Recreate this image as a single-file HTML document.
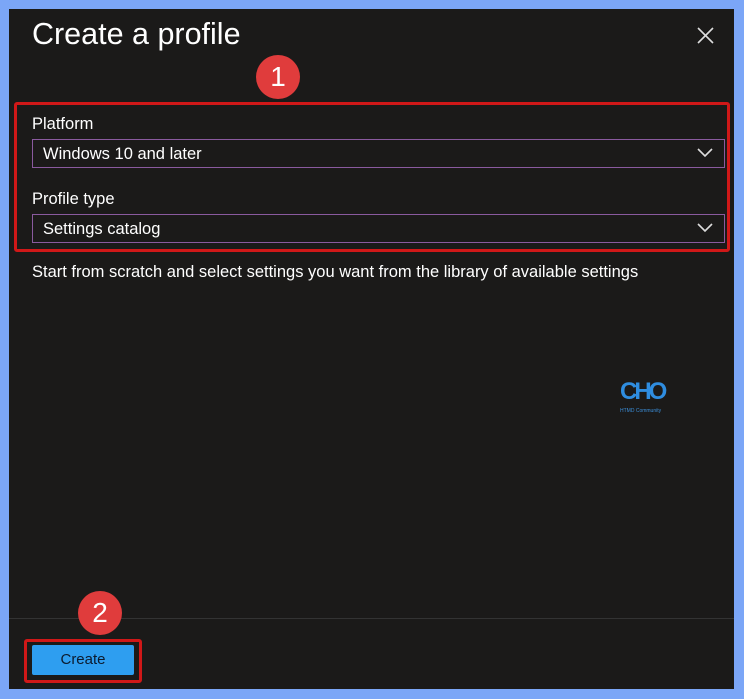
<!DOCTYPE html><html><head><style>
body{margin:0;width:744px;height:699px;background:#7ba6f7;font-family:"Liberation Sans",sans-serif;position:relative;overflow:hidden}
.p{position:absolute;left:9px;top:9px;width:725px;height:680px;background:#1b1a19}
.a{position:absolute}
.t{color:#fff}
.dd{position:absolute;left:32px;width:691px;height:27px;border:1px solid #8a5a9e;color:#fff;font-size:16.5px;line-height:28px;box-sizing:content-box}
.dd span{margin-left:10px}
.b{position:absolute;width:44px;height:44px;border-radius:50%;background:#e03c3c;color:#fff;font-size:28px;text-align:center;line-height:44px}
</style></head><body>
<div class="p"></div>
<div class="a t" style="left:32px;top:17px;font-size:30.5px">Create a profile</div>
<svg class="a" style="left:697px;top:27px" width="17" height="17"><path d="M1 1L16 16M16 1L1 16" stroke="#ddd" stroke-width="1.6"/></svg>
<div class="b" style="left:256px;top:55px">1</div>
<div class="a" style="left:14px;top:102px;width:710px;height:144px;border:3px solid #d01818;border-radius:3px"></div>
<div class="a t" style="left:32px;top:115px;font-size:16.5px">Platform</div>
<div class="dd" style="top:139px"><span>Windows 10 and later</span></div>
<div class="a t" style="left:32px;top:190px;font-size:16.5px">Profile type</div>
<div class="dd" style="top:214px"><span>Settings catalog</span></div>
<svg class="a" style="left:697px;top:148px" width="16" height="10"><path d="M1 1L8 8L15 1" stroke="#ddd" stroke-width="1.6" fill="none"/></svg>
<svg class="a" style="left:697px;top:223px" width="16" height="10"><path d="M1 1L8 8L15 1" stroke="#ddd" stroke-width="1.6" fill="none"/></svg>
<div class="a t" style="left:32px;top:263px;font-size:16.5px">Start from scratch and select settings you want from the library of available settings</div>
<div class="a" style="left:620px;top:378px;color:#2f8de0;font-size:24px;font-weight:bold;letter-spacing:-3px">CHO</div>
<div class="a" style="left:620px;top:408px;color:#3b8ed8;font-size:5px">HTMD Community</div>
<div class="a" style="left:9px;top:618px;width:725px;height:1px;background:#333"></div>
<div class="b" style="left:78px;top:591px">2</div>
<div class="a" style="left:24px;top:639px;width:112px;height:38px;border:3px solid #d01818;border-radius:3px"></div>
<div class="a" style="left:32px;top:645px;width:102px;height:30px;background:#2e9ef0;border-radius:2px;color:#0c1b2e;font-size:15px;text-align:center;line-height:30px">Create</div>
</body></html>
